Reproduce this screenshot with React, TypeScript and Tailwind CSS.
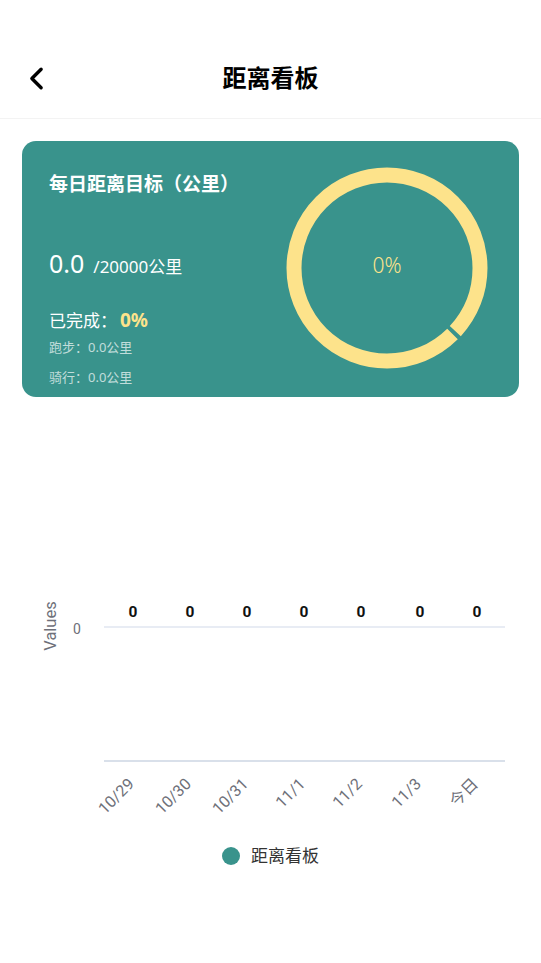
import { ChevronLeft } from "lucide-react";

const days = ["10/29", "10/30", "10/31", "11/1", "11/2", "11/3", "今日"];

function Ring() {
  const r = 93;
  const c = 2 * Math.PI * r;
  const gap = 4;
  return (
    <div className="relative w-[202px] h-[202px] shrink-0">
      <svg width="202" height="202" viewBox="0 0 202 202">
        <g transform="rotate(-90 101 101)">
          <circle
            cx="101"
            cy="101"
            r={r}
            fill="none"
            stroke="#fde38b"
            strokeWidth="15"
            strokeDasharray={`${c * 0.375 - gap} ${gap} ${c * 0.625} 0`}
          />
        </g>
      </svg>
      <div className="absolute inset-0 flex items-center justify-center text-[21px] font-light text-[#fde38b] pb-[4px]">
        0%
      </div>
    </div>
  );
}

function Chart() {
  const xs = [133, 190, 247, 304, 361, 420, 477];
  return (
    <svg width="541" height="260" viewBox="0 580 541 260" className="block">
      <text
        x="56"
        y="626"
        transform="rotate(-90 56 626)"
        textAnchor="middle"
        fontSize="16.5"
        fill="#6e7079"
        fontFamily="Roboto, sans-serif"
      >
        Values
      </text>
      <text x="77" y="634" textAnchor="middle" fontSize="14" fill="#6e7079" fontFamily="Roboto, sans-serif">
        0
      </text>
      <line x1="104" y1="627" x2="505" y2="627" stroke="#e0e6f1" strokeWidth="1.5" />
      <line x1="104" y1="761" x2="505" y2="761" stroke="#ccd6e3" strokeWidth="1.5" />
      {xs.map((x) => (
        <text key={x} x={x} y="617" textAnchor="middle" fontSize="15.5" fontWeight="bold" fill="#111" fontFamily="Roboto, sans-serif">
          0
        </text>
      ))}
      {xs.map((x, i) => (
        <text
          key={i}
          x={x + 2}
          y="785"
          transform={`rotate(-45 ${x + 2} 785)`}
          textAnchor="end"
          fontSize="16"
          fill="#6e7079"
          fontFamily="Roboto, 'Noto Sans CJK SC', sans-serif"
        >
          {days[i]}
        </text>
      ))}
    </svg>
  );
}

export default function App() {
  return (
    <div className="w-[541px] h-[963px] bg-white font-['Noto_Sans','Noto_Sans_CJK_SC',sans-serif] overflow-hidden">
      <div className="h-[119px] border-b border-[#f3f3f3] flex items-center relative pt-[38px]">
        <ChevronLeft className="absolute left-[18px] top-[60px] text-black" size={37} strokeWidth={2.2} />
        <div className="w-full text-center text-[24px] font-bold text-black">距离看板</div>
      </div>

      <div className="mx-[22px] mt-[22px] h-[256px] rounded-[14px] bg-[#39938c] flex pl-[27px] pr-[31px]">
        <div className="flex-1 flex flex-col text-white">
          <div className="mt-[30px] text-[19px] font-bold leading-[26px]">每日距离目标（公里）</div>
          <div className="mt-[49px] flex items-baseline">
            <span className="text-[25px] leading-[34px]">0.0</span>
            <span className="ml-[9px] text-[17px]">/20000公里</span>
          </div>
          <div className="mt-[28px] flex items-baseline leading-[24px]">
            <span className="text-[17px]">已完成：</span>
            <span className="ml-[3px] text-[19px] font-bold text-[#fde38b]">0%</span>
          </div>
          <div className="mt-[5px] text-[13px] text-white/70 leading-[18px]">跑步：0.0公里</div>
          <div className="mt-[12px] text-[13px] text-white/70 leading-[18px]">骑行：0.0公里</div>
        </div>
        <div className="flex items-center pb-[2px]">
          <Ring />
        </div>
      </div>

      <div className="mt-[183px]">
        <Chart />
      </div>
      <div className="mt-[4px] flex items-center justify-center gap-[11px]">
        <div className="w-[18px] h-[18px] rounded-full bg-[#39938c]" />
        <span className="text-[17px] text-[#333] leading-[24px]">距离看板</span>
      </div>
    </div>
  );
}
